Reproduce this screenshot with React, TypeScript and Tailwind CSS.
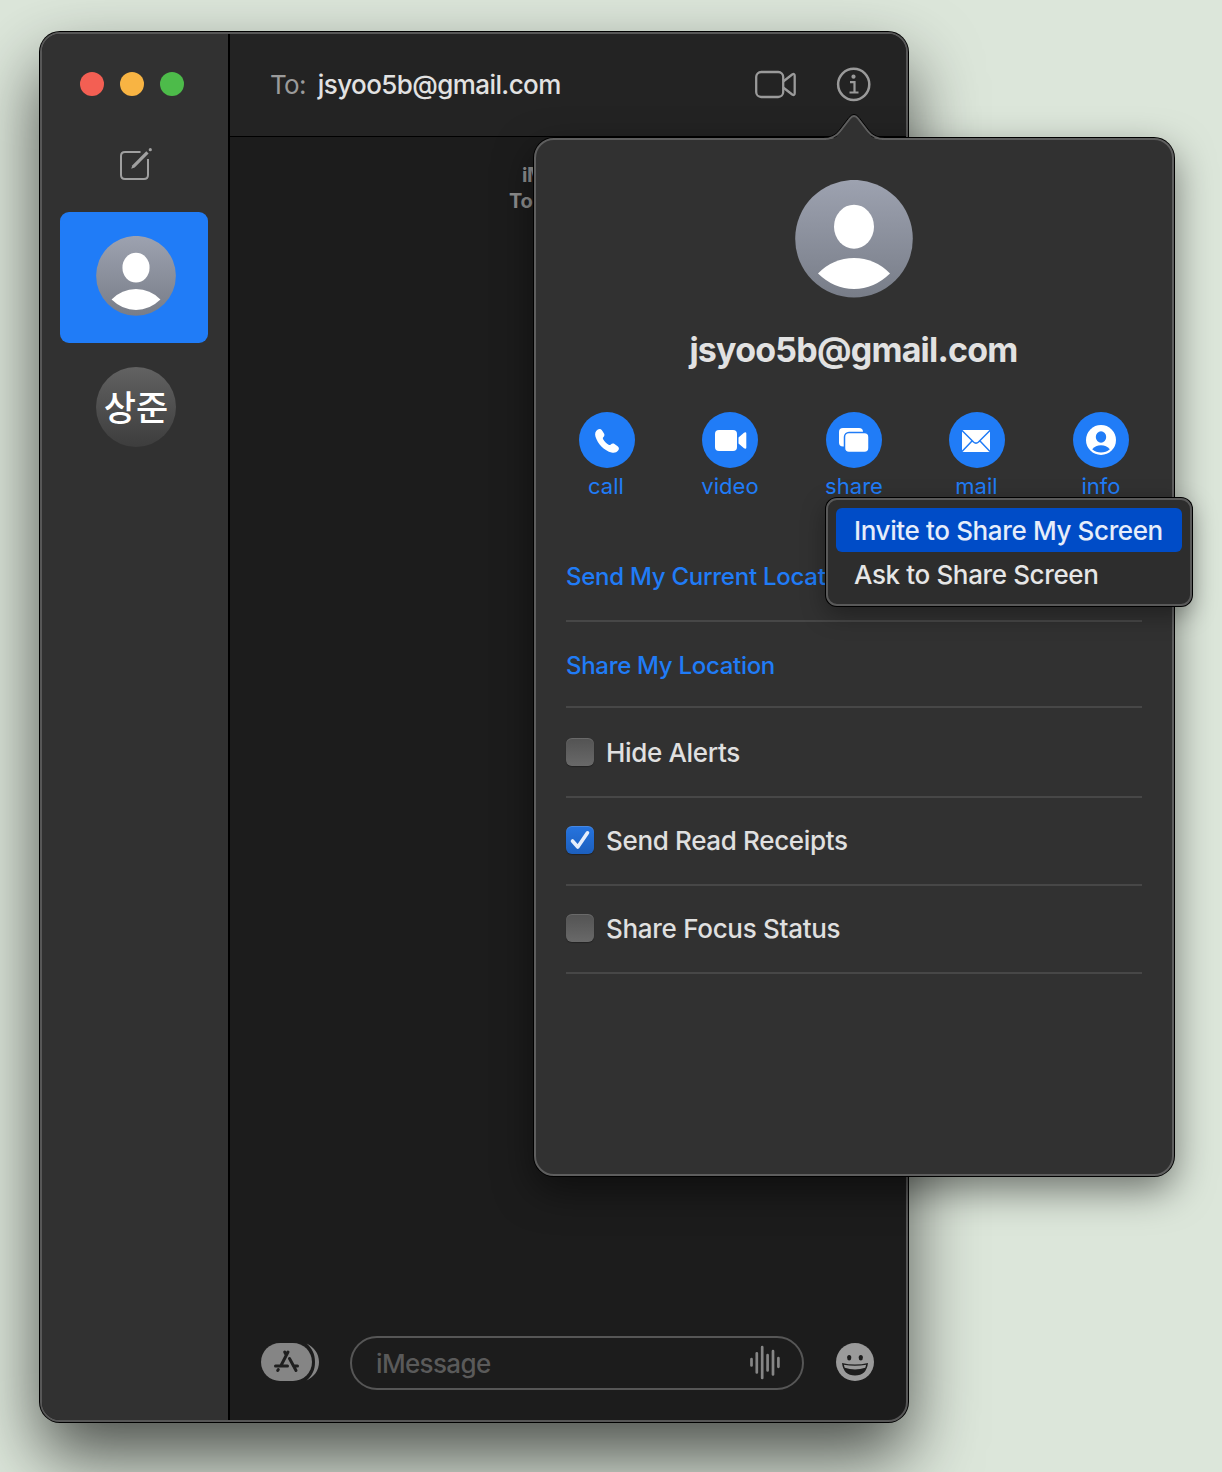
import React, { useId } from "react";

function Avatar({ className }: { className: string }) {
  const id = useId();
  return (
    <svg viewBox="0 0 118 118" className={className}>
      <defs>
        <linearGradient id={id} x1="0" y1="0" x2="0" y2="1">
          <stop offset="0" stopColor="#9da2b0" />
          <stop offset="1" stopColor="#787d88" />
        </linearGradient>
      </defs>
      <circle cx="59" cy="58.700" r="58.800" fill={`url(#${id})`} />
      <ellipse cx="59" cy="46.700" rx="20" ry="22" fill="#fff" />
      <path d="M23 93.500Q38 78 59 78Q80 78 95 93.500Q79 109 59 109Q39 109 23 93.500Z" fill="#fff" />
    </svg>
  );
}

function Glyph({ name }: { name: string }) {
  return (
    <svg viewBox="0 0 56 56" className="size-14">
      <circle cx="28" cy="28" r="28" fill="#207cf7" />
      {name === "call" && (
        <path
          d="M18.500 17.800C20 16.600 21.900 16.800 22.900 18.300L25 21.500C25.800 22.800 25.500 24 24.500 25.100C23.700 26 23.700 26.400 24.300 27.400C25.500 29.400 27.600 31.500 29.600 32.700C30.600 33.300 31 33.200 31.800 32.500C32.900 31.500 34.300 31.300 35.500 32.100L38.600 34.200C40.200 35.300 40.300 37.200 39.100 38.600C37.400 40.600 35.400 41.200 32.500 40.500C25.500 38.800 18.600 31.700 16.500 24.700C15.600 21.600 16.400 19.300 18.500 17.800Z"
          fill="#fff"
        />
      )}
      {name === "video" && (
        <g fill="#fff">
          <rect x="13" y="18" width="22" height="21" rx="4" />
          <path d="M36.500 25.500L42 20.700Q44.300 19.400 44.300 21.600V35.400Q44.300 37.600 42 36.300L36.500 31.500Z" />
        </g>
      )}
      {name === "share" && (
        <g fill="#fff">
          <rect x="13" y="16" width="24" height="18.500" rx="4" />
          <rect x="18.500" y="20.500" width="24.500" height="20" rx="4.500" stroke="#207cf7" strokeWidth="1.500" />
        </g>
      )}
      {name === "mail" && (
        <g>
          <rect x="13" y="18" width="28" height="22" rx="1.500" fill="#fff" />
          <path
            d="M13 18.500L24.500 30Q27 32.200 29.500 30L41 18.500M13 39.500L23 29M41 39.500L31 29"
            fill="none"
            stroke="#207cf7"
            strokeWidth="1.500"
          />
        </g>
      )}
      {name === "info" && (
        <g>
          <circle cx="28" cy="28" r="15" fill="#fff" />
          <ellipse cx="28" cy="25" rx="5.200" ry="5.800" fill="#207cf7" />
          <path d="M19.200 37.300Q22.500 33.200 28 33.200Q33.500 33.200 36.800 37.300Q33 40.500 28 40.500Q23 40.500 19.200 37.300Z" fill="#207cf7" />
        </g>
      )}
    </svg>
  );
}

const actions = [
  { name: "call", gap: "mr-[67px]", label: "-ml-0.5" },
  { name: "video", gap: "mr-[68px]", label: "" },
  { name: "share", gap: "mr-[67px]", label: "" },
  { name: "mail", gap: "mr-[68px]", label: "-ml-px" },
  { name: "info", gap: "", label: "" },
];

function Checkbox({ checked }: { checked?: boolean }) {
  return checked ? (
    <span className="flex size-7 rounded-[6px] bg-linear-to-b from-[#2674df] to-[#1c5fbe] shadow-[0_1px_1px_rgba(0,0,0,0.3),inset_0_1px_0_rgba(255,255,255,0.15)]">
      <svg viewBox="0 0 28 28" className="size-7">
        <path
          d="M6.500 15L11.800 21L21.500 6.800"
          fill="none"
          stroke="#e6eefb"
          strokeWidth="3.600"
          strokeLinecap="round"
          strokeLinejoin="round"
        />
      </svg>
    </span>
  ) : (
    <span className="size-7 rounded-[6px] bg-linear-to-b from-[#535353] to-[#696969] shadow-[0_1px_1px_rgba(0,0,0,0.3),inset_0_1px_0_rgba(255,255,255,0.13)]" />
  );
}

function Sidebar() {
  return (
    <aside className="flex w-[188px] shrink-0 flex-col border-r-2 border-black bg-[#313131]">
      <div className="mt-[38px] ml-[38px] flex gap-4">
        <span className="size-6 rounded-full bg-[#f35f53]" />
        <span className="size-6 rounded-full bg-[#f8b443]" />
        <span className="size-6 rounded-full bg-[#4dbb4a]" />
      </div>
      <svg viewBox="0 0 36 36" className="mt-[50px] ml-[76px] size-9" fill="none" stroke="#a0a0a0" strokeWidth="2">
        <path d="M22.500 6H7Q3 6 3 10V29Q3 33 7 33H26Q30 33 30 29V13" />
        <path d="M13.200 22.800L14.400 19.300L28.300 5.300L30.600 7.600L16.700 21.500Z" fill="#a0a0a0" stroke="none" />
        <circle cx="32.300" cy="3.700" r="1.600" fill="#a0a0a0" stroke="none" />
      </svg>
      <div className="mt-[30px] ml-[18px] flex h-[131px] w-[148px] rounded-[9px] bg-[#207cf7] pt-6 pl-9">
        <Avatar className="size-20" />
      </div>
      <div className="mt-6 ml-[54px] flex size-20 items-center justify-center rounded-full bg-linear-to-b from-[#626262] to-[#3d3d3d] pb-1 font-['Noto_Sans_CJK_KR',sans-serif] text-[35px] leading-none font-medium text-white">
        상준
      </div>
    </aside>
  );
}

function Header() {
  return (
    <header className="flex h-[103px] shrink-0 items-center border-b border-black bg-[#232323] pl-10 text-[26px]">
      <span className="pb-0.5 tracking-[-0.7px] text-[#9b9b9b]">To:</span>
      <span className="ml-3 pb-0.5 font-[450] tracking-[-0.58px] text-[#e2e2e2]">jsyoo5b@gmail.com</span>
      <svg viewBox="0 0 44 30" className="ml-auto h-[30px] w-11" fill="none" stroke="#9a9a9a" strokeWidth="2.300" strokeLinejoin="round">
        <rect x="2.200" y="2" width="27" height="25" rx="5" />
        <path d="M29.200 11.500L38.200 4.500Q40.700 3 40.700 6V23Q40.700 26 38.200 24.500L29.200 17.500" />
      </svg>
      <svg viewBox="0 0 36 36" className="mr-[34px] ml-[38px] size-9" fill="none" stroke="#9a9a9a" strokeWidth="2.500">
        <circle cx="17.700" cy="17.300" r="15.600" />
        <circle cx="17.500" cy="9.700" r="2.100" fill="#9a9a9a" stroke="none" />
        <path d="M14 15.200H18.500V25.500M13.500 25.500H22.500" strokeWidth="2.200" />
      </svg>
    </header>
  );
}

function Composer() {
  return (
    <div className="mt-auto mb-[30px] flex items-center pl-[31px]">
      <svg viewBox="0 0 60 40" className="mb-0.5 h-10 w-[60px]">
        <rect x="0" y="1" width="51" height="38" rx="19" fill="#858585" />
        <path d="M45.500 1.500C53 5 58 11.500 58 20C58 28.500 53 35 45.500 38.500C51 34 54 28 54 20C54 12 51 6 45.500 1.500Z" fill="#858585" />
        <g stroke="#1f1f1f" strokeWidth="3" strokeLinecap="round" fill="none">
          <path d="M27 10L20 23.500M23.700 10L25 12.500M28.500 16.500L35 28.500M14.500 24H26.500M32.500 24H36.500M17.300 27.500L16.700 28.500" />
        </g>
      </svg>
      <div className="ml-[29px] flex h-[54px] w-[454px] items-center rounded-full border-2 border-[#565656] pr-[21px] pl-6">
        <span className="text-[26px] font-[450] tracking-[-0.65px] text-[#5a5a5a]">iMessage</span>
        <svg viewBox="0 0 32 36" className="mb-0.5 ml-auto h-9 w-8" stroke="#868686" strokeWidth="2.700" strokeLinecap="round">
          <path d="M2.500 15.200V21.500M7.800 9.300V28.500M13.200 3.200V34M18.600 11.200V26.500M24 7.200V30.500M29.400 14.200V22.800" />
        </svg>
      </div>
      <svg viewBox="0 0 38 38" className="mb-0.5 ml-8 size-[38px]">
        <circle cx="19" cy="19" r="19" fill="#9a9a9a" />
        <ellipse cx="13.200" cy="14.700" rx="2.100" ry="2.700" fill="#1c1c1c" />
        <ellipse cx="24.800" cy="14.700" rx="2.100" ry="2.700" fill="#1c1c1c" />
        <path d="M6 20Q19 23 32 20Q30.500 32.500 19 32.500Q7.500 32.500 6 20Z" fill="#1c1c1c" />
        <path d="M7.800 21.700Q19 24 30.200 21.700L29.300 24.700Q19 28.300 8.700 24.700Z" fill="#9a9a9a" />
      </svg>
    </div>
  );
}

function Popover() {
  return (
    <section className="absolute top-[138px] left-[534px] h-[1038px] w-[640px] rounded-[20px] border-2 border-[#5e5e5e] bg-[#313131] shadow-[0_0_0_1px_#000,0_14px_38px_rgba(0,0,0,0.5)]">
      <svg viewBox="0 0 64 30" className="absolute -top-[28px] left-[286px] h-[30px] w-16">
        <path d="M4 30V27.500C12 27.500 16 24 19 20L28.500 7Q32 2 35.500 7L45 20C48 24 52 27.500 60 27.500V30Z" fill="#313131" />
        <path d="M1 25.500C10 25.500 14 22 17 18.500L27 5.500Q32 -0.500 37 5.500L47 18.500C50 22 54 25.500 63 25.500" fill="none" stroke="#000" strokeWidth="1" />
        <path d="M1 27C11 27 15 23.500 18 19.500L28 6.500Q32 1.500 36 6.500L46 19.500C49 23.500 53 27 63 27" fill="none" stroke="#5e5e5e" strokeWidth="2" />
      </svg>
      <div className="flex flex-col items-center pt-10">
        <Avatar className="size-[118px]" />
        <h1 className="mt-8 -ml-px text-[34px] leading-10 font-bold tracking-[-0.78px] text-[#e2e2e2]">jsyoo5b@gmail.com</h1>
      </div>
      <nav className="mt-[42px] flex pl-[43px]">
        {actions.map((a) => (
          <div key={a.name} className={`flex w-14 flex-col items-center ${a.gap}`}>
            <Glyph name={a.name} />
            <span className={`mt-1 text-[22px] leading-7 tracking-[0.05px] text-[#207cf7] ${a.label}`}>{a.name}</span>
          </div>
        ))}
      </nav>
      <div className="mt-[32px] flex flex-col px-[30px] text-[#e0e0e0]">
        <div className="flex h-[90px] items-center border-b-2 border-[#474747] pt-0.5 text-2xl font-[450] tracking-[-0.26px] text-[#207cf7]">
          Send My Current Location
        </div>
        <div className="flex h-[86px] items-center border-b-2 border-[#474747] pt-1 text-2xl font-[450] tracking-[-0.3px] text-[#207cf7]">
          Share My Location
        </div>
        <label className="flex h-[90px] items-center gap-3 border-b-2 border-[#474747] text-[26px] font-[450] tracking-[-0.34px]">
          <Checkbox />
          Hide Alerts
        </label>
        <label className="flex h-[88px] items-center gap-3 border-b-2 border-[#474747] pb-0.5 text-[26px] font-[450] tracking-[-0.34px]">
          <Checkbox checked />
          Send Read Receipts
        </label>
        <label className="flex h-[88px] items-center gap-3 border-b-2 border-[#474747] pb-0.5 text-[26px] font-[450] tracking-[-0.3px]">
          <Checkbox />
          Share Focus Status
        </label>
      </div>
    </section>
  );
}

function ShareMenu() {
  return (
    <ul className="absolute top-[498px] left-[826px] h-[108px] w-[366px] rounded-[11px] border-2 border-[#595959] bg-[#2d2d2d] p-2 text-[26px] leading-[46px] font-[450] tracking-[-0.37px] whitespace-nowrap shadow-[0_0_0_1px_#000,0_8px_24px_rgba(0,0,0,0.35)]">
      <li className="h-11 rounded-md bg-[#004cc7] pl-[18px] text-[#e6edfa]">Invite to Share My Screen</li>
      <li className="h-11 pl-[18px] text-[#e6e6e6]">Ask to Share Screen</li>
    </ul>
  );
}

export default function App() {
  return (
    <div className="relative h-[1472px] w-[1222px] overflow-hidden bg-[#dce6da] pt-8 pl-10 font-['Inter','Noto_Sans_CJK_KR',sans-serif]">
      <main className="flex h-[1390px] w-[868px] overflow-hidden rounded-[20px] border-2 border-[#575757] bg-[#1c1c1c] shadow-[0_0_0_1px_#000,0_34px_70px_rgba(0,0,0,0.66)]">
        <Sidebar />
        <div className="flex min-w-0 grow flex-col">
          <Header />
          <div className="flex flex-col pt-[25px] pl-[279px] text-xl leading-[26px] font-bold whitespace-nowrap text-[#8f8f8f]">
            <span className="pl-[13px] tracking-[-0.3px]">iMessage</span>
            <span className="tracking-[-0.3px]">Today 11:40</span>
          </div>
          <Composer />
        </div>
      </main>
      <Popover />
      <ShareMenu />
    </div>
  );
}
